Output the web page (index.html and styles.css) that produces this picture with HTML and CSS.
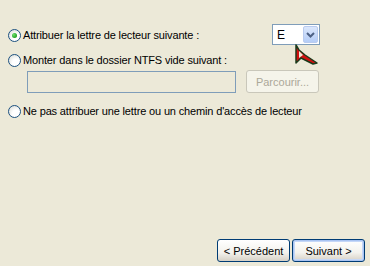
FILE: index.html
```html
<!DOCTYPE html>
<html lang="fr">
<head>
<meta charset="UTF-8" />
<title>Assistant Nouveau volume</title>
<link rel="stylesheet" href="styles.css">
</head>
<body>

<div class="wizard">
  <div class="options">
    <div class="row first">
      <label class="choice">
        <span class="radio checked"></span>
        <span>Attribuer la lettre de lecteur suivante :</span>
      </label>
      <div class="combo">
        <span class="combo-value">E</span>
        <span class="combo-btn">
          <svg width="9" height="6" viewBox="0 0 9 6"><path d="M1 1 L4.5 4.5 L8 1" fill="none" stroke="#4d6185" stroke-width="2"/></svg>
        </span>
        <svg class="cursor" width="24" height="22" viewBox="0 0 24 22">
          <path d="M1 1 L1 19 L6 14 L18 20 L22 19 L10 11 L4 6 Z" fill="#d01010" stroke="#1b3a1b" stroke-width="1.5" stroke-linejoin="round"/>
          <path d="M4 7 L4 14 L8 11 Z" fill="#f0e8d8"/>
        </svg>
      </div>
    </div>

    <label class="choice second">
      <span class="radio"></span>
      <span>Monter dans le dossier NTFS vide suivant :</span>
    </label>
    <div class="row path">
      <div class="field"></div>
      <button class="btn disabled">Parcourir...</button>
    </div>

    <label class="choice third">
      <span class="radio"></span>
      <span>Ne pas attribuer une lettre ou un chemin d'accès de lecteur</span>
    </label>
  </div>

  <div class="footer">
    <button class="btn">&lt; Précédent</button>
    <button class="btn default">Suivant &gt;</button>
  </div>
</div>

</body>
</html>
```

FILE: styles.css
```css
body {
  margin: 0;
  background: #ece9d8;
  font-family: Tahoma, "Liberation Sans", Arial, sans-serif;
  font-size: 11px;
  color: #000000;
}
.wizard {
  width: 370px;
  height: 266px;
  display: flex;
  flex-direction: column;
  justify-content: space-between;
  box-sizing: border-box;
  padding: 25px 5px 4px 8px;
}
.options {
  display: flex;
  flex-direction: column;
}
.row {
  display: flex;
  align-items: center;
  justify-content: space-between;
  padding-right: 45px;
}
.choice {
  display: flex;
  align-items: center;
  gap: 2px;
  height: 20px;
  letter-spacing: -0.15px;
}
.radio {
  width: 11px;
  height: 11px;
  border: 1px solid #1c5180;
  border-radius: 50%;
  background: radial-gradient(circle at 65% 70%, #ffffff 35%, #d4d6d0 100%);
  position: relative;
  box-sizing: content-box;
}
.radio.checked::after {
  content: "";
  position: absolute;
  left: 3px;
  top: 3px;
  width: 5px;
  height: 5px;
  border-radius: 50%;
  background: radial-gradient(circle at 35% 35%, #6fe06f, #21a121 70%);
}
.combo {
  position: relative;
  width: 46px;
  height: 19px;
  border: 1px solid #7f9db9;
  background: #ffffff;
  display: flex;
  align-items: center;
  justify-content: space-between;
  margin-top: -1px;
}
.combo-value {
  padding-left: 4px;
  font-size: 12px;
}
.combo-btn {
  width: 15px;
  height: 17px;
  margin-right: 1px;
  border-radius: 2px;
  background: linear-gradient(#dbe7fc, #b5cdf7);
  border: 1px solid #b9cbef;
  box-sizing: border-box;
  display: flex;
  align-items: center;
  justify-content: center;
}
.cursor {
  position: absolute;
  left: 22px;
  top: 19px;
}
.second {
  margin-top: 5px;
}
.path {
  padding-left: 19px;
  padding-right: 46px;
}
.field {
  width: 207px;
  height: 20px;
  border: 1px solid #7f9db9;
}
.btn {
  font-family: inherit;
  font-size: 11px;
  width: 73px;
  height: 23px;
  padding: 0;
  border: 1px solid #003c74;
  border-radius: 3px;
  background: linear-gradient(#ffffff, #f3f2ed 60%, #d6d0c5);
  color: #000000;
}
.btn.disabled {
  border-color: #c9c7ba;
  background: #f5f4ea;
  color: #aca899;
}
.btn.default {
  box-shadow: inset 0 0 0 1px #a9c4f2, inset 0 0 0 2px #c5d7f7;
}
.third {
  margin-top: 8px;
}
.footer {
  display: flex;
  justify-content: flex-end;
  gap: 2px;
}
```
